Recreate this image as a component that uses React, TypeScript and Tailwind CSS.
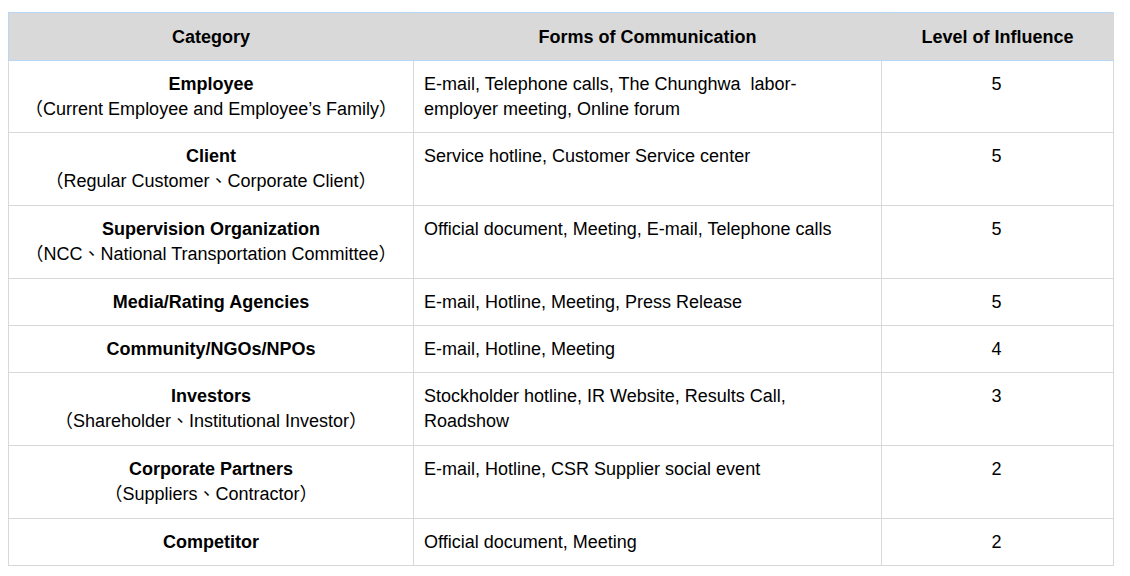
import React from "react";

const rows: { title: string; sub?: string; forms: string[]; level: string; h: string }[] = [
  { title: "Employee", sub: "（Current Employee and Employee’s Family）", forms: ["E-mail, Telephone calls, The Chunghwa  labor-", "employer meeting, Online forum"], level: "5", h: "h-[72px]" },
  { title: "Client", sub: "（Regular Customer、Corporate Client）", forms: ["Service hotline, Customer Service center"], level: "5", h: "h-[73px]" },
  { title: "Supervision Organization", sub: "（NCC、National Transportation Committee）", forms: ["Official document, Meeting, E-mail, Telephone calls"], level: "5", h: "h-[73px]" },
  { title: "Media/Rating Agencies", forms: ["E-mail, Hotline, Meeting, Press Release"], level: "5", h: "h-[47px]" },
  { title: "Community/NGOs/NPOs", forms: ["E-mail, Hotline, Meeting"], level: "4", h: "h-[47px]" },
  { title: "Investors", sub: "（Shareholder、Institutional Investor）", forms: ["Stockholder hotline, IR Website, Results Call,", "Roadshow"], level: "3", h: "h-[73px]" },
  { title: "Corporate Partners", sub: "（Suppliers、Contractor）", forms: ["E-mail, Hotline, CSR Supplier social event"], level: "2", h: "h-[73px]" },
  { title: "Competitor", forms: ["Official document, Meeting"], level: "2", h: "h-[47px]" },
];

export default function App() {
  return (
    <div className="bg-white w-[1130px] h-[576px] pt-[12px] pl-[8px] text-black" style={{ fontFamily: '"Liberation Sans", Arial, "Noto Sans CJK TC", sans-serif' }}>
      <table className="border-collapse text-[18px] leading-[25px] w-[1105px] table-fixed">
        <colgroup>
          <col className="w-[405px]" />
          <col className="w-[468px]" />
          <col className="w-[232px]" />
        </colgroup>
        <thead>
          <tr className="bg-[#d9d9d9] h-[48px]">
            <th className="border border-[#b8d6f6] border-r-[#d9d9d9] font-bold text-center align-middle pt-[2px] pb-0 px-0">Category</th>
            <th className="border border-[#b8d6f6] border-r-[#d9d9d9] border-l-[#b8d6f6] font-bold text-center align-middle pt-[2px] pb-0 px-0">Forms of Communication</th>
            <th className="border border-[#d9d9d9] border-t-[#b8d6f6] border-b-[#b8d6f6] border-l-[#b8d6f6] font-bold text-center align-middle pt-[2px] pb-0 px-0">Level of Influence</th>
          </tr>
        </thead>
        <tbody>
          {rows.map((r, i) => (
            <tr key={i} className={r.h}>
              <td className="border border-[#d8d8d8] text-center align-top pt-[11px] pb-0 px-[4px]">
                <div className="font-bold">{r.title}</div>
                {r.sub && <div className="whitespace-nowrap">{r.sub}</div>}
              </td>
              <td className="border border-[#d8d8d8] text-left align-top pt-[11px] pb-0 px-[10px]">
                {r.forms.map((f, j) => (
                  <div key={j} className="whitespace-pre">{f}</div>
                ))}
              </td>
              <td className="border border-[#d8d8d8] text-center align-top pt-[11px] pb-0 pl-[10px] pr-[12px]">{r.level}</td>
            </tr>
          ))}
        </tbody>
      </table>
    </div>
  );
}
